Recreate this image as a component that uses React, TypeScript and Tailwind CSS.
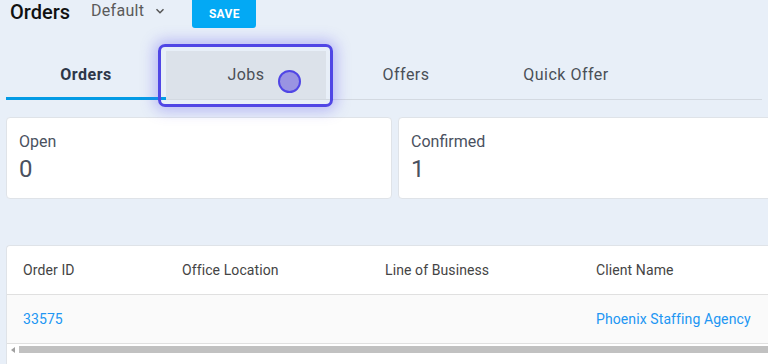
import React from "react";

export default function App() {
  const tabs = ["Orders", "Jobs", "Offers", "Quick Offer"];
  return (
    <div
      className="relative w-[768px] h-[364px] overflow-hidden bg-[#e8eff8]"
      style={{ fontFamily: "Roboto, 'Liberation Sans', sans-serif" }}
    >
      {/* Header */}
      <div className="flex items-start h-[44px]">
        <div className="ml-[10px] text-[20px] leading-[24px] text-[#111] font-medium">Orders</div>
        <div className="ml-[21px] flex items-center h-[22px] text-[16px] text-[#5a5a5a] tracking-[0.3px]">
          Default
          <svg className="ml-[9px]" width="14" height="14" viewBox="0 0 24 24" fill="none" stroke="#555" strokeWidth="2.5">
            <path d="M6 9l6 6 6-6" />
          </svg>
        </div>
        <div className="ml-[25px] w-[64px] h-[28px] bg-[#03a9f4] rounded-b-[3px] text-white text-[12px] font-bold flex items-center justify-center tracking-[0.3px]">
          SAVE
        </div>
      </div>

      {/* Tabs */}
      <div className="mt-[7px] mx-[6px] flex border-b border-[#d3d9e1] h-[49px]">
        {tabs.map((t, i) => (
          <div
            key={t}
            className={
              "w-[160px] h-[48px] flex items-center justify-center text-[16px] relative " +
              (i === 0 ? "font-bold text-[#2d3748]" : "text-[#4a4f57]") +
              (i === 1 ? " bg-[#dce2ea]" : "")
            }
          >
            <span className="tracking-[0.5px]">{t}</span>
            {i === 0 && <div className="absolute left-0 right-0 bottom-[-1px] h-[3px] bg-[#039be5]" />}
          </div>
        ))}
      </div>

      {/* Highlight overlay */}
      <div className="absolute left-[158px] top-[44px] w-[175px] h-[63px] rounded-[7px] border-[3px] border-[#5046e5] shadow-[0_0_14px_4px_rgba(99,90,240,0.35)]" />
      <div className="absolute left-[278px] top-[70px] w-[23px] h-[23px] rounded-full bg-[#9a94e2] border-[2px] border-[#5046e5]" />

      {/* Cards */}
      <div className="mt-[17px] ml-[6px] flex gap-[6px]">
        {[
          ["Open", "0"],
          ["Confirmed", "1"],
        ].map(([l, v]) => (
          <div key={l} className="w-[386px] h-[82px] shrink-0 bg-white border border-[#dfe3e8] rounded-[4px] pl-[12px] pt-[14px]">
            <div className="text-[16px] leading-[20px] text-[#4a5160]">{l}</div>
            <div className="text-[24px] leading-[30px] mt-[2px] text-[#4a5160]">{v}</div>
          </div>
        ))}
      </div>

      {/* Table */}
      <div className="mt-[46px] ml-[6px] w-[800px] h-[140px] bg-white border-t border-l border-[#dfe3e8] rounded-tl-[4px]">
        <div className="flex h-[49px] items-center border-b border-[#e0e0e0] text-[14px] text-[#444] tracking-[0.1px]">
          <div className="w-[175px] pl-[16px]">Order ID</div>
          <div className="w-[203px]">Office Location</div>
          <div className="w-[211px]">Line of Business</div>
          <div>Client Name</div>
        </div>
        <div className="flex h-[49px] items-center bg-[#fafafa] border-b border-[#e0e0e0] text-[14px] text-[#2196f3] tracking-[0.1px]">
          <div className="w-[175px] pl-[16px]">33575</div>
          <div className="w-[203px]" />
          <div className="w-[211px]" />
          <div>Phoenix Staffing Agency</div>
        </div>
        <div className="flex items-center h-[7px] mt-[2px]">
          <svg className="ml-[4px] mr-[4px]" width="4" height="6" viewBox="0 0 4 6">
            <path d="M4 0 L0 3 L4 6 Z" fill="#a0a0a0" />
          </svg>
          <div className="flex-1 h-[7px] bg-[#c1c1c1]" />
        </div>
      </div>
    </div>
  );
}
